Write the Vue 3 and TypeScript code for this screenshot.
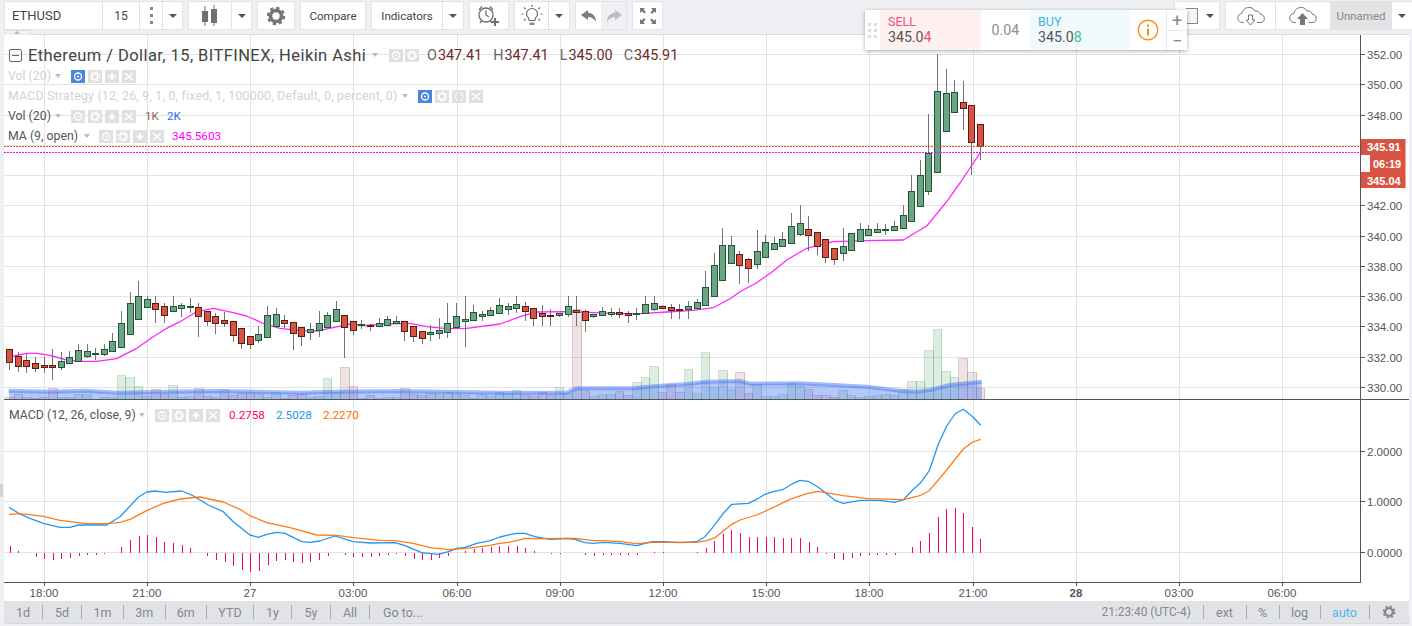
<script setup lang="ts">
type Raw = [number, number, number, number, number];
interface Bar { cx: number; left: number; wt: number; bt: number; bh: number; wb: number; up: boolean; }

const STEP = 8.59;
const cxOf = (i: number) => 9.3 + i * STEP;

const segA: Raw[] = [
  [208,208,247,270,0],[216,229,257,275,0],[222,241,257,278,0],[232,250,263,276,0],[232,256,260,278,0],[208,256,260,299,0],
  [216,244,260,270,1],[213,232,250,250,1],[193,211,242,245,1],[193,214,227,233,1],[205,219,221,240,1],[192,208,221,228,1],
  [160,184,214,216,1],[94,130,200,200,1],[37,70,163,163,1],[3,49,118,118,1],[49,58,82,85,1],[49,70,88,128,0],[70,79,106,128,0],
  [49,79,94,94,1],[70,76,85,110,1],[55,78,82,100,1],[70,82,109,170,0],[94,94,124,137,0],[100,109,130,163,0],[97,121,130,140,0],
  [124,124,166,185,0],[145,145,190,208,0],[169,169,193,206,0],[137,163,181,188,1],[79,106,172,172,1],[85,103,139,139,1],
  [106,121,130,145,0],[127,127,160,209,0],[142,142,169,197,0],[130,148,157,179,1],[94,130,151,170,1],[97,106,142,145,1],
  [64,88,124,124,1],[106,106,142,233,0],[124,124,151,166,0],[120,133,136,148,1],[133,136,139,152,0],[115,130,139,139,1],
  [108,118,136,136,1],[108,124,129,133,1],[124,124,154,183,0],[139,139,169,185,0],[154,154,175,191,0],[136,157,163,182,1],
  [115,151,160,178,1],[70,130,157,175,1],[70,109,142,142,1],[49,118,124,200,1],[76,97,121,121,1],[94,103,109,124,1],[82,91,106,106,1],
];
const segB: Raw[] = [
  [295,316,340,340,1],[309,319,328,345,1],[288,313,325,338,1],[306,319,332,362,0],[325,325,355,378,0],[315,340,349,378,0],
  [327,345,347,378,0],[338,340,346,350,1],[288,319,343,350,1],[288,331,337,378,0],[331,334,361,396,0],[343,343,349,353,1],
  [321,334,346,346,1],[324,337,341,350,1],[324,337,343,353,0],[333,340,346,368,0],[324,340,343,360,1],[288,313,340,340,1],
  [288,310,328,334,1],[315,319,325,325,0],[312,322,331,356,0],[312,328,329,356,0],[303,319,328,356,1],[297,307,325,325,1],
  [213,262,316,316,1],[160,196,289,289,1],[85,136,241,241,1],[108,136,190,190,1],[154,163,196,253,0],[175,178,205,248,0],
  [91,154,193,208,1],[106,127,172,172,1],[112,130,148,148,1],[97,118,139,139,1],[40,79,130,130,1],[15,70,103,107,1],
  [48,88,106,154,0],[97,97,139,165,0],[118,118,172,188,0],[145,145,178,195,0],[85,139,160,184,1],[100,100,151,151,1],
  [70,88,124,124,1],[76,88,106,106,1],[70,88,97,97,1],[73,88,91,104,1],[64,79,91,94,1],[15,46,85,85,1],
];
const segC: Raw[] = [
  [175,191,221,221,1],[160,175,206,206,1],[114,153,191,195,1],[54,91,172,172,1],[69,93,131,131,1],[80,92,112,112,1],
  [81,102,108,130,0],[105,105,142,175,0],[124,124,146,160,0],
];

const conv = (r: Raw, off: number, d: number): Raw =>
  [off + r[0] / d, off + r[1] / d, off + r[2] / d, off + r[3] / d, r[4]];
const raws: Raw[] = [...segA.map(r => conv(r, 280, 3)), ...segB.map(r => conv(r, 200, 3)), ...segC];

const bars: Bar[] = raws.map((r, i) => {
  const cx = cxOf(i);
  const left = Math.round(cx) - 3;
  const bt = Math.round(r[1]);
  return { cx, left, wt: Math.round(r[0]), bt, bh: Math.max(1, Math.round(r[2]) - bt), wb: Math.round(r[3]), up: r[4] === 1 };
});

const volA = [350,343,350,355,350,324,350,352,343,343,357,352,352,286,292,319,348,328,343,316,352,348,324,348,350,328,345,338,336,343,352,336,355,345,341,350,348,294,335,262,319,355,346,355,352,350,324,343,346,338,341,336,343,346,355,343,348];
const volB = [575,580,571,584,588,576,584,562,580,327,571,588,583,583,573,586,546,532,499,577,553,577,508,580,457,562,511,568,517,580,553,589,589,583,550,559,568,586,586,592,571,586,592,589,586,583,586,568,544,544,451,388,514,532,475,517,564];
const volTops = [...volA.map(v => 280 + v / 3), ...volB.map(v => 200 + v / 3)];
const vols = volTops.map((t, i) => {
  const x = Math.round(cxOf(i) - STEP / 2) + 0.5;
  const x2 = Math.round(cxOf(i) + STEP / 2) + 0.5;
  return { x, w: x2 - x, y: Math.round(t) + 0.5, h: Math.max(0, 399 - Math.round(t) - 0.5), up: raws[i][4] === 1 };
});

type P = [number, number];
const pts = (a: P[], ox: number, oy: number) => a.map(p => `${(ox + p[0] / 3).toFixed(1)},${(oy + p[1] / 3).toFixed(1)}`).join(" ");

const maLine = pts([[40,228],[80,220],[110,220],[150,226],[200,240],[240,244],[290,244],[350,236],[410,205],[460,170],[500,145],[540,125],[590,95],[640,85],[700,98],[740,108],[790,130],[840,145],[900,152],[950,153],[1000,143],[1050,132],[1100,136],[1150,132],[1230,130],[1280,140],[1340,146],[1400,145],[1500,132]], 0, 280)
  + " " + pts([[60,350],[110,336],[190,335],[260,337],[340,340],[420,341],[500,336],[580,331],[640,323],[690,296],[720,275],[770,248],[820,213],[860,180],[920,145],[1000,125],[1100,122],[1210,120],[1280,78],[1340,5]], 500, 200)
  + " 960,183 980,153";

const volMa = pts([[26,332],[150,335],[260,332],[350,338],[500,335],[650,333],[900,338],[1000,335],[1200,333],[1500,338]], 0, 280)
  + " " + pts([[100,578],[200,578],[230,565],[400,565],[470,558],[560,552],[620,545],[720,543],[750,551],[900,550],[960,553],[1100,560],[1200,572],[1250,575],[1290,570],[1350,555],[1445,545]], 500, 200);
const volArea = `9,399 ${volMa} 982,399`;

const macdBlue = pts([[27,322],[60,342],[90,355],[130,370],[180,382],[210,382],[235,375],[320,375],[360,350],[415,292],[440,276],[465,273],[495,277],[545,273],[575,285],[625,315],[670,335],[700,365],[750,405],[775,412],[800,403],[830,397],[855,400],[905,425],[930,427],[960,423],[1005,408],[1060,425],[1110,429],[1185,428],[1215,437],[1265,458],[1315,463],[1345,455],[1370,445],[1395,442],[1430,430],[1470,422]], 0, 400)
  + " " + pts([[0,411],[30,404],[50,400],[75,400],[105,410],[150,418],[200,415],[225,418],[255,428],[280,430],[310,427],[360,430],[410,437],[455,425],[490,425],[540,428],[590,425],[615,410],[640,380],[670,340],[695,313],[745,310],[770,298],[795,283],[820,275],[850,268],[880,250],[900,241],[925,244],[955,262],[1005,301],[1030,310],[1080,301],[1140,301],[1185,307],[1210,299],[1240,268],[1262,248],[1288,212],[1315,133],[1340,78],[1365,42],[1390,28],[1418,50],[1442,76]], 500, 400);
const macdOrange = pts([[27,343],[60,341],[130,349],[180,361],[260,371],[320,371],[360,367],[390,358],[440,332],[490,310],[540,297],[600,291],[670,306],[720,328],[750,347],[800,368],[870,383],[950,405],[1010,406],[1060,413],[1140,421],[1185,422],[1240,430],[1290,443],[1345,449],[1400,445],[1470,436]], 0, 400)
  + " " + pts([[0,430],[25,427],[50,422],[75,415],[130,416],[225,415],[280,422],[310,422],[360,425],[410,431],[460,427],[590,427],[620,422],[645,413],[695,373],[720,360],[770,345],[825,320],[870,298],[920,281],[955,274],[1030,287],[1105,296],[1210,299],[1262,286],[1288,272],[1340,210],[1390,147],[1418,126],[1442,118]], 500, 400);

const histA = [438,453,460,470,476,480,476,473,467,464,464,461,458,441,420,408,405,411,426,429,435,444,458,467,480,486,497,510,516,513,495,483,480,486,489,486,480,467,459,465,471,471,471,468,465,461,468,477,480,480,474,468,459,453,446,443,441];
const histB = [437,437,437,444,453,459,461,461,459,459,465,468,465,465,465,465,465,459,456,456,459,459,459,456,444,423,402,390,399,411,411,411,411,414,414,414,426,441,461,477,480,474,468,465,465,465,465,459,441,423,399,351,327,324,339,381,417];
const hist = [...histA, ...histB].map((v, i) => ({ x: Math.round(cxOf(i) + 0.5) + 0.5, y: 400 + v / 3 })).filter(h => Math.abs(h.y - 553) > 0.5);

const vGrid = [44, 147, 250, 353, 457, 560, 663, 766, 869, 973, 1076, 1179, 1282];
const hGrid = [54, 84, 115, 145, 175, 205, 236, 266, 296, 326, 357, 387, 451, 501, 552];
const priceLabels = [[352, 54], [350, 84], [348, 115], [342, 205], [340, 236], [338, 266], [336, 296], [334, 326], [332, 357], [330, 387]].map(([p, y]) => ({ t: p.toFixed(2), y }));
const macdLabels = [{ t: "2.0000", y: 451 }, { t: "1.0000", y: 501 }, { t: "0.0000", y: 552 }];
const timeLabels = [
  { t: "18:00", x: 44 }, { t: "21:00", x: 147 }, { t: "27", x: 250 }, { t: "03:00", x: 353 }, { t: "06:00", x: 457 },
  { t: "09:00", x: 560 }, { t: "12:00", x: 663 }, { t: "15:00", x: 766 }, { t: "18:00", x: 869 }, { t: "21:00", x: 973 },
  { t: "28", x: 1076, b: true }, { t: "03:00", x: 1179 }, { t: "06:00", x: 1282 },
];

const glyph: Record<string, string> = {
  plus: "M7 3v7M3.5 6.5h7",
  x: "M3 3l8 7M11 3l-8 7",
  brace: "M5.5 2.5c-2 0-1 3-2.5 4 1.500 1 .5 4 2.500 4M8.500 2.500c2 0 1 3 2.500 4-1.500 1-.5 4-2.500 4",
};
const rangeItems = ["1d", "5d", "1m", "3m", "6m", "YTD", "1y", "5y", "All"];
</script>

<template>
  <div class="page">
    <header class="toolbar">
      <div class="box w179">
        <div class="cell sym">ETHUSD</div>
        <div class="cell int">15</div>
        <div class="cell dots"><i></i><i></i><i></i></div>
        <div class="cell car dotted"><b class="caret"></b></div>
      </div>
      <div class="box w64">
        <div class="cell c42">
          <svg width="18" height="22" viewBox="0 0 18 22"><g fill="#707070"><rect x="1" y="6" width="6" height="11" /><rect x="3.500" y="1" width="1" height="20" /><rect x="10" y="4" width="6" height="14" /><rect x="12.500" y="0" width="1" height="21" /></g></svg>
        </div>
        <div class="cell car solid"><b class="caret"></b></div>
      </div>
      <div class="box w38 center">
        <svg width="20" height="20" viewBox="0 0 20 20"><circle cx="10" cy="10" r="5.500" fill="none" stroke="#757575" stroke-width="3.600" /><circle cx="10" cy="10" r="8" fill="none" stroke="#757575" stroke-width="2.400" stroke-dasharray="3.300 2.980" /></svg>
      </div>
      <div class="box w66 center txt">Compare</div>
      <div class="box w93">
        <div class="cell ind txt">Indicators</div>
        <div class="cell car dotted"><b class="caret"></b></div>
      </div>
      <div class="box w40 center">
        <svg width="26" height="26" viewBox="0 0 26 26" fill="none" stroke="#6f6f6f" stroke-width="1.300"><circle cx="10" cy="12" r="7" /><path d="M10 7.500V12l3 2M3 7l3-3.500M17 7l-3-3.500M5.500 18l-1.500 2M14 18l1 1" /><path d="M19 15v8M15 19h8" stroke-width="2" /></svg>
      </div>
      <div class="box w56">
        <div class="cell c33">
          <svg width="24" height="24" viewBox="0 0 24 24" fill="none" stroke="#6f6f6f" stroke-width="1.200"><path d="M8.500 14c-1.500-1.500-2-2.700-2-4a5.500 5.500 0 0 1 11 0c0 1.300-.5 2.500-2 4l-.5 2.500H9z" /><path d="M9.500 18.500h5v2.500h-5z" fill="#8a8a8a" stroke="none" /><path d="M12 1v2M4 3.500l1.500 1.500M20 3.500L18.500 5M1.500 10h2M20.500 10h2M4 16.500l1.500-1.500M20 16.500L18.500 15" /></svg>
        </div>
        <div class="cell car dotted"><b class="caret"></b></div>
      </div>
      <div class="box w52">
        <div class="cell half">
          <svg width="16" height="12" viewBox="0 0 16 12"><path d="M7 0L0 5l7 5V7c3.500 0 6 1.500 8 5 0-6-3.500-9-8-9.200z" fill="#7b7b7b" /></svg>
        </div>
        <div class="cell half off">
          <svg width="16" height="12" viewBox="0 0 16 12"><path d="M9 0l7 5-7 5V7c-3.500 0-6 1.500-8 5 0-6 3.500-9 8-9.200z" fill="#b9bcc0" /></svg>
        </div>
      </div>
      <div class="box w31 center">
        <svg width="18" height="18" viewBox="0 0 18 18" fill="#777"><path d="M1 1h5L4.500 2.600l2.400 2.400-1.600 1.600-2.400-2.400L1 6zM17 1v5l-1.600-1.500-2.400 2.400-1.600-1.600 2.400-2.400L12 1zM1 17v-5l1.600 1.500 2.400-2.400 1.600 1.600-2.400 2.400L6 17zM17 17h-5l1.500-1.600-2.400-2.400 1.600-1.600 2.400 2.400L17 12z" /></svg>
      </div>

      <div class="right">
        <div class="box w46">
          <div class="cell sq"><span class="square"></span></div>
          <div class="cell car2"><b class="caret"></b></div>
        </div>
        <div class="box w187">
          <div class="cell cloud solid-r">
            <svg width="28" height="20" viewBox="0 0 28 20" fill="none" stroke="#777" stroke-width="1"><path d="M7 16.500H5.500a4.500 4.500 0 0 1-.5-9 7 7 0 0 1 13-2.500 5 5 0 0 1 5.500 3.500 4 4 0 0 1-.5 8H20" /><path d="M11.500 9h4v5H18l-4.500 5L9 14h2.500z" fill="#fff" /></svg>
          </div>
          <div class="cell cloud2">
            <svg width="28" height="20" viewBox="0 0 28 20" fill="none" stroke="#777" stroke-width="1"><path d="M7 16.500H5.500a4.500 4.500 0 0 1-.5-9 7 7 0 0 1 13-2.500 5 5 0 0 1 5.500 3.500 4 4 0 0 1-.5 8H20" /><path d="M11 19v-6H8l5.500-6 5.500 6h-3v6z" fill="#777" stroke="none" /></svg>
          </div>
          <div class="cell unnamed">Unnamed</div>
          <div class="cell car3"><b class="caret"></b></div>
        </div>
      </div>
    </header>

    <main class="panel">
      <svg class="chart" width="1405" height="566" viewBox="4 35 1405 566">
        <g stroke="#e3e3e3" shape-rendering="crispEdges">
          <line v-for="x in vGrid" :key="'v' + x" :x1="x + 0.5" y1="35" :x2="x + 0.5" y2="582" />
          <line v-for="y in hGrid" :key="'h' + y" x1="4" :y1="y + 0.5" x2="1360" :y2="y + 0.5" />
        </g>

        <g shape-rendering="crispEdges">
          <rect v-for="(v, i) in vols" :key="'vol' + i" :x="v.x" :y="v.y" :width="v.w" :height="v.h"
            :fill="v.up ? 'rgba(107,175,125,.22)' : 'rgba(172,113,113,.2)'"
            :stroke="v.up ? 'rgba(90,160,110,.32)' : 'rgba(172,113,113,.36)'" />
        </g>
        <polygon :points="volArea" fill="rgba(60,110,245,.38)" />
        <polyline :points="volMa" fill="none" stroke="rgba(70,120,245,.5)" stroke-width="4" stroke-linejoin="round" />

        <polyline :points="maLine" fill="none" stroke="#ff26ff" stroke-width="1.300" stroke-linejoin="round" />

        <g shape-rendering="crispEdges">
          <g v-for="(b, i) in bars" :key="'c' + i">
            <line :x1="b.left + 3.5" :y1="b.wt" :x2="b.left + 3.5" :y2="b.wb" stroke="#737375" />
            <rect :x="b.left + 0.5" :y="b.bt + 0.5" width="6" :height="b.bh"
              :fill="b.up ? '#6ba583' : '#d75442'" :stroke="b.up ? '#225437' : '#5b1a13'" />
          </g>
        </g>

        <g shape-rendering="crispEdges" stroke-dasharray="2 1">
          <line x1="4" y1="146.500" x2="1360" y2="146.500" stroke="#d75442" />
          <line x1="4" y1="152.500" x2="1360" y2="152.500" stroke="#ff00ff" />
        </g>

        <g stroke="#555" shape-rendering="crispEdges">
          <line x1="4" y1="399.500" x2="1409" y2="399.500" />
          <line x1="4" y1="582.500" x2="1361" y2="582.500" />
          <line x1="1360.500" y1="35" x2="1360.500" y2="582" />
          <line v-for="p in [...priceLabels, ...macdLabels]" :key="'pt' + p.y" x1="1361" :y1="p.y + 0.5" x2="1365" :y2="p.y + 0.5" />
          <line v-for="t in timeLabels" :key="'tt' + t.x" :x1="t.x + 0.5" y1="583" :x2="t.x + 0.5" y2="586" />
        </g>

        <g class="hist" stroke="#ff0066" shape-rendering="crispEdges">
          <line v-for="(h, i) in hist" :key="'h' + i" :x1="h.x" y1="553" :x2="h.x" :y2="h.y" />
        </g>
        <polyline :points="macdBlue" fill="none" stroke="#2196f3" stroke-width="1.300" stroke-linejoin="round" />
        <polyline :points="macdOrange" fill="none" stroke="#ff6d00" stroke-width="1.300" stroke-linejoin="round" opacity=".9" />

        <g class="axis">
          <text v-for="p in priceLabels" :key="'pl' + p.y" x="1367" :y="p.y + 4.500">{{ p.t }}</text>
          <text v-for="p in macdLabels" :key="'ml' + p.y" x="1367" :y="p.y + 4.500">{{ p.t }}</text>
          <text v-for="t in timeLabels" :key="'tl' + t.x" :x="t.x" y="597" text-anchor="middle" :font-weight="t.b ? 700 : 400">{{ t.t }}</text>
        </g>

        <g class="tags">
          <rect x="1361" y="139" width="44.500" height="16" fill="#d75442" />
          <rect x="1370" y="155" width="35.500" height="17" fill="#d75442" />
          <rect x="1361" y="172" width="44.500" height="16" fill="#d75442" />
          <text x="1367" y="151">345.91</text>
          <text x="1373" y="168">06:19</text>
          <text x="1367" y="184.500">345.04</text>
        </g>
      </svg>

      <span class="tab"><em></em></span>
      <span class="handle"></span>

      <div class="legend">
        <div class="row main">
          <span class="minus"></span>
          <span class="title">Ethereum / Dollar, 15, BITFINEX, Heikin Ashi</span>
          <b class="caret lg t1"></b>
          <span class="ics m1">
            <span class="ic"><svg width="14" height="13" viewBox="0 0 14 13"><circle cx="7" cy="6.500" r="3.500" fill="none" stroke="#fff" stroke-width="1.300" /><circle cx="7" cy="6.500" r="1" fill="#fff" /></svg></span>
            <span class="ic"><svg width="14" height="13" viewBox="0 0 14 13"><circle cx="7" cy="6.500" r="3" fill="none" stroke="#fff" stroke-width="1.500" /><circle cx="7" cy="6.500" r="4.500" fill="none" stroke="#fff" stroke-width="1.400" stroke-dasharray="1.700 1.800" /></svg></span>
          </span>
          <span class="ohlc">
            <span>O<u>347.41</u></span><span>H<u>347.41</u></span><span>L<u>345.00</u></span><span>C<u>345.91</u></span>
          </span>
        </div>

        <div class="row faded">
          <span class="name w42">Vol (20)</span>
          <b class="caret lg"></b>
          <span class="ics s10">
            <span class="ic on"><svg width="14" height="13" viewBox="0 0 14 13"><circle cx="7" cy="6.500" r="3.500" fill="none" stroke="#fff" stroke-width="1.300" /><circle cx="7" cy="6.500" r="1" fill="#fff" /></svg></span>
            <span class="ic"><svg width="14" height="13" viewBox="0 0 14 13"><circle cx="7" cy="6.500" r="3" fill="none" stroke="#fff" stroke-width="1.500" /><circle cx="7" cy="6.500" r="4.500" fill="none" stroke="#fff" stroke-width="1.400" stroke-dasharray="1.700 1.800" /></svg></span>
            <span class="ic"><svg width="14" height="13" viewBox="0 0 14 13"><path :d="glyph.plus" stroke="#fff" stroke-width="2" /></svg></span>
            <span class="ic"><svg width="14" height="13" viewBox="0 0 14 13"><path :d="glyph.x" stroke="#fff" stroke-width="1.600" /></svg></span>
          </span>
        </div>

        <div class="row faded">
          <span class="name w389 wide">MACD Strategy (12, 26, 9, 1, 0, fixed, 1, 100000, Default, 0, percent, 0)</span>
          <b class="caret lg"></b>
          <span class="ics s10">
            <span class="ic on"><svg width="14" height="13" viewBox="0 0 14 13"><circle cx="7" cy="6.500" r="3.500" fill="none" stroke="#fff" stroke-width="1.300" /><circle cx="7" cy="6.500" r="1" fill="#fff" /></svg></span>
            <span class="ic"><svg width="14" height="13" viewBox="0 0 14 13"><circle cx="7" cy="6.500" r="3" fill="none" stroke="#fff" stroke-width="1.500" /><circle cx="7" cy="6.500" r="4.500" fill="none" stroke="#fff" stroke-width="1.400" stroke-dasharray="1.700 1.800" /></svg></span>
            <span class="ic"><svg width="14" height="13" viewBox="0 0 14 13"><path :d="glyph.brace" fill="none" stroke="#fff" stroke-width="1" /></svg></span>
            <span class="ic"><svg width="14" height="13" viewBox="0 0 14 13"><path :d="glyph.x" stroke="#fff" stroke-width="1.600" /></svg></span>
          </span>
        </div>

        <div class="row">
          <span class="name w42">Vol (20)</span>
          <b class="caret lg"></b>
          <span class="ics s10">
            <span class="ic"><svg width="14" height="13" viewBox="0 0 14 13"><circle cx="7" cy="6.500" r="3.500" fill="none" stroke="#fff" stroke-width="1.300" /><circle cx="7" cy="6.500" r="1" fill="#fff" /></svg></span>
            <span class="ic"><svg width="14" height="13" viewBox="0 0 14 13"><circle cx="7" cy="6.500" r="3" fill="none" stroke="#fff" stroke-width="1.500" /><circle cx="7" cy="6.500" r="4.500" fill="none" stroke="#fff" stroke-width="1.400" stroke-dasharray="1.700 1.800" /></svg></span>
            <span class="ic"><svg width="14" height="13" viewBox="0 0 14 13"><path :d="glyph.plus" stroke="#fff" stroke-width="2" /></svg></span>
            <span class="ic"><svg width="14" height="13" viewBox="0 0 14 13"><path :d="glyph.x" stroke="#fff" stroke-width="1.600" /></svg></span>
          </span>
          <span class="val k1">1K</span><span class="val k2">2K</span>
        </div>

        <div class="row">
          <span class="name w71">MA (9, open)</span>
          <b class="caret lg"></b>
          <span class="ics s9">
            <span class="ic"><svg width="14" height="13" viewBox="0 0 14 13"><circle cx="7" cy="6.500" r="3.500" fill="none" stroke="#fff" stroke-width="1.300" /><circle cx="7" cy="6.500" r="1" fill="#fff" /></svg></span>
            <span class="ic"><svg width="14" height="13" viewBox="0 0 14 13"><circle cx="7" cy="6.500" r="3" fill="none" stroke="#fff" stroke-width="1.500" /><circle cx="7" cy="6.500" r="4.500" fill="none" stroke="#fff" stroke-width="1.400" stroke-dasharray="1.700 1.800" /></svg></span>
            <span class="ic"><svg width="14" height="13" viewBox="0 0 14 13"><path :d="glyph.plus" stroke="#fff" stroke-width="2" /></svg></span>
            <span class="ic"><svg width="14" height="13" viewBox="0 0 14 13"><path :d="glyph.x" stroke="#fff" stroke-width="1.600" /></svg></span>
          </span>
          <span class="val ma">345.5603</span>
        </div>
      </div>

      <div class="legend2">
        <span class="name w125">MACD (12, 26, close, 9)</span>
        <b class="caret lg"></b>
        <span class="ics s10">
          <span class="ic"><svg width="14" height="13" viewBox="0 0 14 13"><circle cx="7" cy="6.500" r="3.500" fill="none" stroke="#fff" stroke-width="1.300" /><circle cx="7" cy="6.500" r="1" fill="#fff" /></svg></span>
          <span class="ic"><svg width="14" height="13" viewBox="0 0 14 13"><circle cx="7" cy="6.500" r="3" fill="none" stroke="#fff" stroke-width="1.500" /><circle cx="7" cy="6.500" r="4.500" fill="none" stroke="#fff" stroke-width="1.400" stroke-dasharray="1.700 1.800" /></svg></span>
          <span class="ic"><svg width="14" height="13" viewBox="0 0 14 13"><path :d="glyph.plus" stroke="#fff" stroke-width="2" /></svg></span>
          <span class="ic"><svg width="14" height="13" viewBox="0 0 14 13"><path :d="glyph.x" stroke="#fff" stroke-width="1.600" /></svg></span>
        </span>
        <span class="val hv">0.2758</span><span class="val bl">2.5028</span><span class="val or">2.2270</span>
      </div>

      <div class="widget">
        <div class="grip"><i></i><i></i><i></i><i></i><i></i><i></i></div>
        <div class="side sell"><span class="lab">SELL</span><span class="px">345.0<em>4</em></span></div>
        <div class="spread">0.04</div>
        <div class="side buy"><span class="lab">BUY</span><span class="px">345.0<em>8</em></span></div>
        <div class="info">
          <svg width="22" height="22" viewBox="0 0 22 22"><circle cx="11" cy="11" r="9.800" fill="none" stroke="#f7931e" stroke-width="1.400" /><rect x="10" y="5.500" width="2" height="2.400" fill="#f7931e" /><rect x="10" y="9.500" width="2" height="7" fill="#f7931e" /></svg>
        </div>
        <div class="zoom"><span>+</span><span>−</span></div>
      </div>
    </main>

    <footer class="bottom">
      <div class="ranges">
        <span v-for="r in rangeItems" :key="r" class="rg" :class="'r-' + r">{{ r }}</span>
        <span class="goto">Go to...</span>
      </div>
      <div class="tools">
        <span class="clock">21:23:40 <small>(UTC-4)</small></span>
        <span class="t t-ext">ext</span>
        <span class="t t-pc">%</span>
        <span class="t t-log">log</span>
        <span class="t t-auto">auto</span>
        <span class="t t-gear">
          <svg width="14" height="14" viewBox="0 0 20 20"><circle cx="10" cy="10" r="5.500" fill="none" stroke="#85878c" stroke-width="3.400" /><circle cx="10" cy="10" r="8" fill="none" stroke="#85878c" stroke-width="2.400" stroke-dasharray="3.300 2.980" /></svg>
        </span>
      </div>
    </footer>
  </div>
</template>

<style scoped>
.page { width: 1412px; height: 626px; background: #eef0f3; overflow: hidden; display: flex; flex-direction: column; font-family: Roboto, "Liberation Sans", sans-serif; color: #555; position: relative; }
.toolbar { height: 35px; flex: none; display: flex; gap: 5px; padding: 1px 0 0 4px; box-sizing: border-box; align-items: flex-start; }
.box { height: 29px; background: #fff; border: 1px solid #e0e3e8; box-sizing: border-box; display: flex; flex: none; font-size: 12px; color: #444; }
.center { align-items: center; justify-content: center; }
.txt { font-size: 11.600px; }
.w179 { width: 179px; } .w64 { width: 64px; } .w38 { width: 38px; } .w66 { width: 66px; } .w93 { width: 93px; }
.w40 { width: 40px; } .w56 { width: 56px; } .w52 { width: 52px; } .w31 { width: 31px; } .w46 { width: 46px; } .w187 { width: 187px; }
.cell { display: flex; align-items: center; justify-content: center; height: 100%; box-sizing: border-box; }
.sym { width: 98px; justify-content: flex-start; padding-left: 7px; font-size: 13px; border-right: 1px solid #e0e3e8; }
.int { width: 37px; border-right: 1px solid #e0e3e8; }
.dots { width: 22px; flex-direction: column; gap: 4px; }
.dots i { width: 3px; height: 3px; background: #888; display: block; }
.car { flex: 1; }
.dotted { border-left: 1px dotted #c8c8c8; }
.solid { border-left: 1px solid #e0e3e8; }
.caret { width: 0; height: 0; border-left: 4px solid transparent; border-right: 4px solid transparent; border-top: 4px solid #555; display: block; }
.c42 { width: 42px; }
.ind { width: 70px; }
.c33 { width: 33px; }
.half { width: 50%; }
.half.off { background: #eef0f3; }
.right { margin-left: auto; display: flex; gap: 5px; }
.w187 { border-right: none; }
.sq { width: 23px; justify-content: flex-end; }
.square { width: 12px; height: 16px; background: #f4f4f4; border: 1px solid #888; box-sizing: border-box; border-left: none; }
.car2 { flex: 1; padding-left: 2px; }
.cloud { width: 50px; }
.solid-r { border-right: 1px solid #e0e3e8; }
.cloud2 { width: 54px; }
.unnamed { width: 62px; background: #e2e3e5; color: #888; font-size: 11.500px; }
.car3 { flex: 1; }

.panel { position: relative; height: 566px; flex: none; margin: 0 3px 0 4px; background: #fff; box-shadow: 0 -1px 0 #d9dce1; }
.chart { display: block; }
.chart text { font-family: "Liberation Sans", Arial, sans-serif; font-size: 11.500px; }
.axis text { fill: #555; }
.chart .tags text { fill: #fff; font-weight: 700; font-size: 11px; }

.tab { position: absolute; left: 0; top: -5px; width: 26px; height: 5px; background: #eef0f3; border: 1px solid #dfe2e7; border-bottom: none; box-sizing: border-box; }
.tab em { position: absolute; left: 9px; top: 0; border-left: 3px solid transparent; border-right: 3px solid transparent; border-bottom: 3px solid #b5b8bd; }
.handle { position: absolute; left: -4px; top: 449px; width: 3px; height: 13px; background: #cfd2d7; }

.legend { position: absolute; left: 4px; top: 9px; display: flex; flex-direction: column; pointer-events: none; }
.row { display: flex; align-items: center; height: 20px; font-size: 12.300px; color: #555; white-space: nowrap; }
.row.main { height: 22px; margin-left: 1px; }
.minus { width: 13px; height: 13px; border: 1px solid #666; box-sizing: border-box; border-radius: 2px; position: relative; margin-right: 6px; }
.minus::after { content: ""; position: absolute; left: 2px; right: 2px; top: 5px; height: 1px; background: #666; }
.title { font-size: 16.500px; letter-spacing: .42px; color: #444; width: 338px; white-space: nowrap; }
.lg { border-top-color: #bbb; border-left-width: 3.500px; border-right-width: 3.500px; margin-left: 5px; }
.t1 { margin-left: 6px; }
.ics { display: flex; gap: 3px; }
.m1 { margin-left: 11px; gap: 2px; }
.s10 { margin-left: 10px; }
.s9 { margin-left: 9px; }
.ic { width: 14px; height: 13px; background: #e0e0e0; display: block; }
.ic svg { display: block; }
.ic.on { background: #4a86dc; }
.ohlc { display: flex; margin-left: 8px; font-size: 14.400px; color: #666; gap: 11px; }
.ohlc u { text-decoration: none; color: #6b2b26; margin-left: 1px; }
.name { white-space: nowrap; }
.w42 { width: 42px; } .w389 { width: 389px; } .w71 { width: 71px; } .w125 { width: 125px; }
.wide { letter-spacing: .23px; }
.faded .name { color: #d2d2d2; }
.val { font-size: 11.700px; }
.k1 { color: #9a5a5a; margin-left: 9px; }
.k2 { color: #2a6fe8; margin-left: 8px; }
.ma { color: #ff00ff; margin-left: 8px; }
.legend2 { position: absolute; left: 5px; top: 370px; height: 20px; display: flex; align-items: center; font-size: 12.300px; color: #555; white-space: nowrap; }
.hv { color: #ff0066; margin-left: 9px; }
.bl { color: #2196f3; margin-left: 11px; }
.or { color: #ff6d00; margin-left: 11px; }

.widget { position: absolute; left: 861px; top: -25px; width: 322px; height: 40px; background: #fff; box-shadow: 0 1px 4px rgba(0, 0, 0, .35); display: flex; }
.grip { width: 15px; display: grid; grid-template-columns: 3px 3px; gap: 3px; align-content: center; justify-content: center; }
.grip i { width: 3px; height: 3px; background: #dcdcdc; }
.side { width: 100px; display: flex; flex-direction: column; justify-content: center; padding-left: 8px; box-sizing: border-box; }
.sell { width: 101px; background: #fff0f2; }
.buy { background: #f0f9fc; }
.lab { font-size: 12.500px; line-height: 15px; }
.sell .lab { color: #f0506e; }
.buy .lab { color: #3bb3e4; }
.px { font-size: 14.200px; line-height: 17px; color: #555; }
.px em { font-style: normal; }
.sell em { color: #f0506e; }
.buy em { color: #3fbf96; }
.spread { width: 49.500px; display: flex; align-items: center; justify-content: center; font-size: 14.200px; color: #8c8c8c; }
.info { width: 36.500px; display: flex; align-items: center; justify-content: center; }
.zoom { width: 20px; display: flex; flex-direction: column; border-left: 1px solid #e6e8ec; box-sizing: content-box; }
.zoom span { height: 20px; display: flex; align-items: center; justify-content: center; font-size: 18px; color: #888; box-sizing: border-box; }
.zoom span + span { border-top: 1px solid #e6e8ec; }

.bottom { flex: none; height: 22px; margin: 0 3px 0 4px; background: #e1e3e7; border-bottom: 1px solid #d6d9de; box-sizing: content-box; display: flex; justify-content: space-between; align-items: center; font-size: 12.500px; color: #85878c; }
.ranges { display: flex; align-items: center; height: 100%; }
.rg { display: flex; align-items: center; justify-content: center; height: 14px; border-right: 1px solid #a9abb0; box-sizing: border-box; }
.r-1d { width: 39px; } .r-5d { width: 39px; } .r-1m { width: 42px; } .r-3m { width: 41.500px; } .r-6m { width: 41.500px; }
.r-YTD { width: 47px; } .r-1y { width: 38px; } .r-5y { width: 39px; } .r-All { width: 39px; }
.goto { margin-left: 13px; }
.tools { display: flex; align-items: center; height: 100%; }
.clock { width: 101px; white-space: nowrap; font-size: 11.900px; }
.clock small { font-size: 11.900px; }
.t { display: flex; align-items: center; justify-content: center; height: 14px; border-left: 1px solid #a9abb0; box-sizing: border-box; }
.t-ext { width: 43px; } .t-pc { width: 33px; } .t-log { width: 41px; } .t-auto { width: 49px; color: #4db7e8; }
.t-gear { width: 40.500px; }
</style>
